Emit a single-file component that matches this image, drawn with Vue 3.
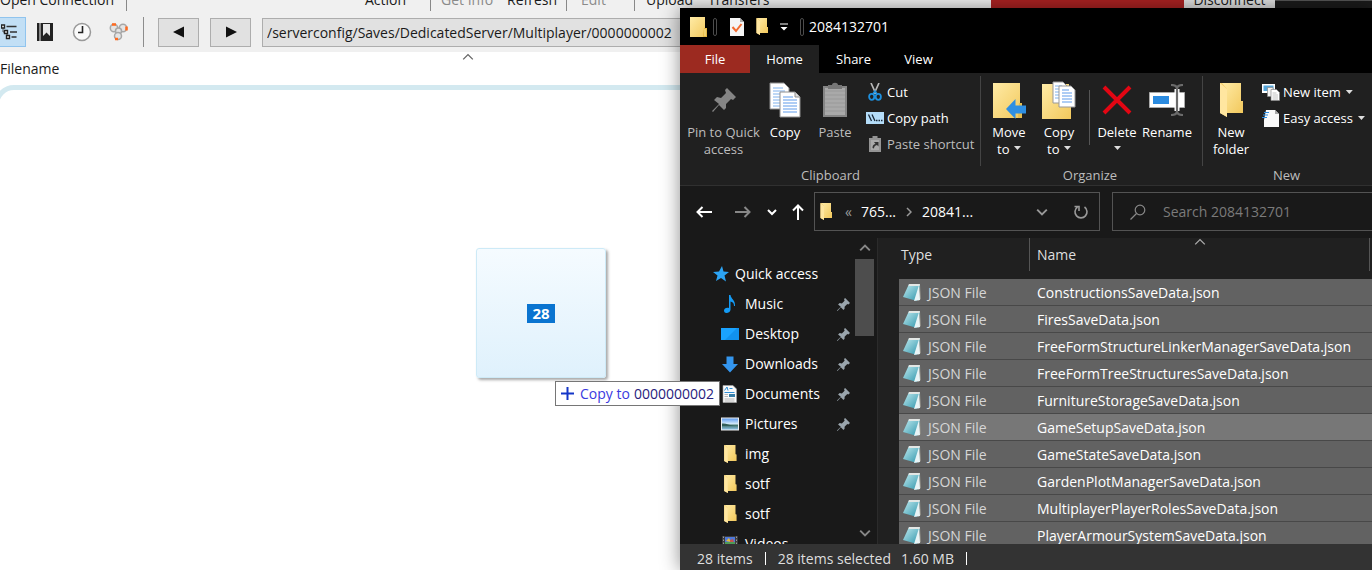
<script setup>
const places = [
  { name: 'Music', icon: 'music', pinned: true },
  { name: 'Desktop', icon: 'desktop', pinned: true },
  { name: 'Downloads', icon: 'download', pinned: true },
  { name: 'Documents', icon: 'document', pinned: true },
  { name: 'Pictures', icon: 'picture', pinned: true },
  { name: 'img', icon: 'folder-open' },
  { name: 'sotf', icon: 'folder-open' },
  { name: 'sotf', icon: 'folder-open' },
  { name: 'Videos', icon: 'video' },
]

const files = [
  'ConstructionsSaveData.json',
  'FiresSaveData.json',
  'FreeFormStructureLinkerManagerSaveData.json',
  'FreeFormTreeStructuresSaveData.json',
  'FurnitureStorageSaveData.json',
  'GameSetupSaveData.json',
  'GameStateSaveData.json',
  'GardenPlotManagerSaveData.json',
  'MultiplayerPlayerRolesSaveData.json',
  'PlayerArmourSystemSaveData.json',
]
const focused = 'GameSetupSaveData.json'
const remotePath = '/serverconfig/Saves/DedicatedServer/Multiplayer/0000000002'
</script>

<template>
  <div class="desktop">
    <svg class="defs" aria-hidden="true">
      <defs>
        <linearGradient id="gFolder" x1="0" y1="0" x2="1" y2="1">
          <stop offset="0" stop-color="#ffeba6" /><stop offset="1" stop-color="#f2c85c" />
        </linearGradient>
        <linearGradient id="gNote" x1="0" y1="0" x2="1" y2="1">
          <stop offset="0" stop-color="#c5edf2" /><stop offset="1" stop-color="#2b93a9" />
        </linearGradient>
        <linearGradient id="gSky" x1="0" y1="0" x2="0" y2="1">
          <stop offset="0" stop-color="#5f9df0" /><stop offset="0.5" stop-color="#d8ecfa" /><stop offset="0.6" stop-color="#3d6f66" /><stop offset="1" stop-color="#8fc4e8" />
        </linearGradient>
      </defs>
      <symbol id="folder" viewBox="0 0 17 20">
        <path d="M0 0H15V11H17V20H0Z" fill="url(#gFolder)" />
        <path d="M14 11h3v9h-4z" fill="#e5b944" />
        <path d="M15 12v7" stroke="#ffe89c" />
      </symbol>
      <symbol id="folder-open" viewBox="0 0 24 34">
        <path d="M1 0H22V18H24V30H8V34L1 30Z" fill="#f5cd69" />
        <path d="M1 0 8 6V34L1 30Z" fill="#ffe6a0" />
        <path d="M9 0H22V18H24V30H8V6L3 0Z" fill="url(#gFolder)" />
      </symbol>
      <symbol id="pin" viewBox="0 0 24 24">
        <path d="M15 0 24 9 21 12 19 11 14 16 14 20 12 22 7 17 1 24 0 23 7 16 2 12 5 9 9 10 14 5 13 2Z" />
      </symbol>
      <symbol id="copy" viewBox="0 0 32 36">
        <path d="M1 1H15L20 6V27H1Z" fill="#fff" stroke="#8e8e8e" />
        <path d="M4 6h10M4 9h12M4 12h7M4 15h7M4 18h7M4 21h7M4 24h7" stroke="#7fb1ec" />
        <path d="M11 10H26L31 15V35H11Z" fill="#fff" stroke="#8e8e8e" />
        <path d="M26 10V15H31" fill="#ddd" stroke="#8e8e8e" />
        <path d="M14 15h10M14 18h14M14 21h14M14 24h14M14 27h14M14 30h14" stroke="#5e9bea" />
      </symbol>
      <symbol id="paste" viewBox="0 0 26 36">
        <path d="M1 4H25V35H1Z" fill="#858585" />
        <path d="M3 6H23V33H3Z" fill="#a9a9a9" />
        <path d="M3 9h20M3 13h20M3 17h20M3 21h20M3 25h20M3 29h20" stroke="#999" />
        <path d="M6 7V3H10C10 0 16 0 16 3H20V7Z" fill="#777" />
      </symbol>
      <symbol id="cut" viewBox="0 0 14 18">
        <path d="M3 0 8 11M11 0 6 11" stroke="#b9b9b9" stroke-width="1.7" fill="none" />
        <ellipse cx="3.7" cy="13.8" rx="2.6" ry="3" fill="none" stroke="#1e8fdd" stroke-width="1.8" />
        <ellipse cx="10.3" cy="13.8" rx="2.6" ry="3" fill="none" stroke="#1e8fdd" stroke-width="1.8" />
        <path d="M5 11 7 8 9 11" fill="none" stroke="#1e8fdd" stroke-width="1.6" />
      </symbol>
      <symbol id="path" viewBox="0 0 18 12">
        <path d="M0 0H18V12H0Z" fill="#b4dcf8" />
        <path d="M2.5 2.500 5.500 9M6 2.500 9 9M10 8.500h1.500M12.500 8.500H14M15 8.500h1.500" stroke="#182838" stroke-width="1.3" fill="none" />
      </symbol>
      <symbol id="shortcut" viewBox="0 0 12 16">
        <path d="M0 2H3.500V0H8.500V2H12V16H0Z" fill="#949494" />
        <path d="M2 4H10V14H2Z" fill="#aaa" />
        <path d="M3.500 12C3.500 9 5 8 6.500 8L5 6H9.500V10.500L8 9C6 9.500 5 10.500 5 12.500Z" fill="#333" />
      </symbol>
      <symbol id="moveto" viewBox="0 0 33 37">
        <path d="M0 1H27V21H29V36H0Z" fill="url(#gFolder)" />
        <path d="M26 21h3v15h-4z" fill="#e6bd4f" />
        <path d="M13 27 22.500 17V23.500H33V31.500H22.500V37Z" fill="#2f8fe2" />
      </symbol>
      <symbol id="copyto" viewBox="0 0 34 38">
        <path d="M0 3H27V22H29V38H0Z" fill="url(#gFolder)" />
        <path d="M11 1H21L25 5V22H11Z" fill="#fff" stroke="#999" />
        <path d="M13 5h7M13 8h8M13 11h8M13 14h8M13 17h8" stroke="#7fb1ec" />
        <path d="M17 5H29L33 9V26H17Z" fill="#fff" stroke="#999" />
        <path d="M20 9h7M20 12h10M20 15h10M20 18h10M20 21h10" stroke="#5e9bea" />
      </symbol>
      <symbol id="delete" viewBox="0 0 30 30">
        <path d="M2 2 28 28M28 2 2 28" stroke="#e30613" stroke-width="4" />
      </symbol>
      <symbol id="rename" viewBox="0 0 36 32">
        <path d="M0.500 8.500H35.500V23.500H0.500Z" fill="#fff" stroke="#aaa" />
        <path d="M4 12H20V20H4Z" fill="#2b8be0" />
        <path d="M28 5V27" stroke="#fff" stroke-width="5" />
        <path d="M22 1C26 1 28 2 28 5V27C28 30 26 31 22 31M34 1C30 1 28 2 28 5M34 31C30 31 28 30 28 27" stroke="#6b6b6b" stroke-width="2.200" fill="none" />
      </symbol>
      <symbol id="newitem" viewBox="0 0 18 18">
        <path d="M0 1H13V10H0Z" fill="#fff" /><path d="M1.500 2.500H11.500V8H1.500Z" fill="#55a5d9" />
        <path d="M5.500 4.500H11V13.500H5.500Z" fill="#f4f4f4" stroke="#888" stroke-width="0.700" />
        <path d="M9 6.500H14.500L17.500 9.500V17.500H9Z" fill="#fff" stroke="#888" stroke-width="0.700" />
        <path d="M10.500 10h4M10.500 12h5.500M10.500 14h5.500M10.500 16h5.500" stroke="#b3b3b3" stroke-width="0.800" />
      </symbol>
      <symbol id="easy" viewBox="0 0 18 18">
        <path d="M4 1H13L17 5V18H2V11Z" fill="#fafafa" /><path d="M13 1V5H17Z" fill="#aaa" />
        <path d="M2 3.500h5M1 6h5M0 8.500h5" stroke="#2e8de0" stroke-width="1.200" />
      </symbol>
      <symbol id="star" viewBox="0 0 16 16">
        <path d="M9 0 10.500 5.500 16 6 11.500 9.500 13 15.500 8 12 3 15 4.500 9.500 0 6 6 5.500Z" fill="#2ca4f4" />
      </symbol>
      <symbol id="music" viewBox="0 0 18 18">
        <path d="M8 0H9.500C10 4 14.500 5 14 11H13C13 8 11.500 7 9.500 6.500V14.500C9.500 17 7 18 5.500 18 3.500 18 3 16.500 3 15.500 3 13.500 5.500 12 8 13Z" fill="#149bf5" />
      </symbol>
      <symbol id="desktop" viewBox="0 0 18 18">
        <path d="M0 3H18V15H0Z" fill="#1aa3ff" /><path d="M4 15 16 3H18V15Z" fill="#1192ee" />
      </symbol>
      <symbol id="download" viewBox="0 0 18 18">
        <path d="M5.500 1.500H12.500V9H17L9 17.500 1 9H5.500Z" fill="#3496ee" />
      </symbol>
      <symbol id="document" viewBox="0 0 18 18">
        <path d="M2 0.500H12L15.500 4V17.500H2Z" fill="#fafafa" stroke="#aaa" stroke-width="0.600" />
        <path d="M3.500 5.500 6 2 7 5.500M8.500 3.500h3M3.500 7.500h10" stroke="#2f8fd6" fill="none" />
        <path d="M8 9H14V12H8Z" fill="#397fa8" />
        <path d="M3.500 9.500h3.500M3.500 11.500h3.500M3.500 14h10M3.500 16h10" stroke="#999" stroke-width="0.700" />
      </symbol>
      <symbol id="picture" viewBox="0 0 18 18">
        <path d="M0 2.500H18V15.500H0Z" fill="#eee" /><path d="M1 3.500H17V14.500H1Z" fill="url(#gSky)" />
        <path d="M1 8.500C5 8 8 10 13 11H1Z" fill="#335e58" />
      </symbol>
      <symbol id="video" viewBox="0 0 18 18">
        <path d="M1 1H17V17H1Z" fill="#3b3b3b" /><path d="M4 2H14V8.500H4Z" fill="#4f79d8" />
        <path d="M5 6 8 3 10 7Z" fill="#e6b93c" /><path d="M9 5 12 4 13 8H9Z" fill="#c8544a" /><path d="M4 7H14V9H4Z" fill="#4e9b57" />
        <path d="M2.500 1.500V17M15.500 1.500V17" stroke="#999" stroke-dasharray="1.500 1.500" />
      </symbol>
      <symbol id="json" viewBox="0 0 19 19">
        <path d="M6 2 17 1 18 16 15 18Z" fill="#8f8d86" />
        <path d="M6 1 17 2 14 18 0 14Z" fill="url(#gNote)" />
        <path d="M16 2 17 17 11 18Z" fill="#e8f4f6" />
        <path d="M6 1 17 1 16.500 3 5.500 3Z" fill="#e3e7e5" />
      </symbol>
      <symbol id="down" viewBox="0 0 10 10"><path d="M1 3 5 7 9 3" fill="none" stroke="currentColor" stroke-width="1.600" /></symbol>
      <symbol id="up" viewBox="0 0 10 10"><path d="M1 7 5 3 9 7" fill="none" stroke="currentColor" stroke-width="1.100" /></symbol>
    </svg>

    <main class="client">
      <nav class="menu">
        <button class="m-open">Open Connection</button>
        <button class="m-action">Action</button>
        <button class="m-info off">Get Info</button>
        <button class="m-refresh">Refresh</button>
        <button class="m-edit off">Edit</button>
        <button class="m-upload">Upload</button>
        <button class="m-transfers">Transfers</button>
        <span class="m-alert"></span>
        <button class="m-disconnect">Disconnect</button>
        <span class="m-rest"></span>
      </nav>
      <div class="toolbar">
        <button class="tool active" aria-label="Outline view">
          <svg width="18" height="18" viewBox="0 0 18 18"><path d="M2 3V9H6M6 9V14" fill="none" stroke="#555" /><path d="M0.500 2h3v3h-3zM3.500 7.500h3v3h-3zM5.500 12.500h3v3h-3z" fill="#fff" stroke="#222" stroke-width="1.400" /><path d="M5.500 3.500h10M9 9h7M10.500 14h5" stroke="#333" stroke-width="1.600" /></svg>
        </button>
        <button class="tool" aria-label="Bookmarks">
          <svg width="18" height="18" viewBox="0 0 18 18"><path d="M1 0H17V18H1Z" fill="#222" /><path d="M4 0v18" stroke="#eee" /><path d="M7 1H14V13L10.500 9.500 7 13Z" fill="#e8e8e8" /></svg>
        </button>
        <button class="tool" aria-label="History">
          <svg width="20" height="20" viewBox="0 0 20 20"><circle cx="10" cy="10" r="8.500" fill="#fafafa" stroke="#999" stroke-width="1.500" /><path d="M10.500 4V10.500H6" fill="none" stroke="#222" stroke-width="1.600" /></svg>
        </button>
        <button class="tool" aria-label="Bonjour">
          <svg width="20" height="20" viewBox="0 0 20 20" fill="#e4e4e4" stroke="#a7a7a7" stroke-width="1.500"><circle cx="5" cy="6" r="3.700" /><circle cx="14" cy="6" r="3.700" /><circle cx="9.500" cy="9" r="3" /><circle cx="9" cy="14" r="3.500" /><path d="M3 2.500h4M17.500 4.500v4M6 17h3" stroke="#ff6a1f" stroke-width="2.500" /></svg>
        </button>
        <span class="divider"></span>
        <button class="nav-btn" aria-label="Back"><svg width="12" height="12" viewBox="0 0 12 12"><path d="M11 0.500V11.500L0 6Z" fill="#111" /></svg></button>
        <button class="nav-btn" aria-label="Forward"><svg width="12" height="12" viewBox="0 0 12 12"><path d="M1 0.500V11.500L12 6Z" fill="#111" /></svg></button>
        <input class="remote" aria-label="Remote path" :value="remotePath" />
      </div>
      <div class="list-head">
        <span>Filename</span>
        <svg class="sort" width="12" height="12"><use href="#up" /></svg>
      </div>
      <div class="drop-zone"></div>
    </main>

    <section class="explorer">
      <header class="title">
        <svg class="t-folder" width="17" height="20"><use href="#folder" /></svg>
        <span class="grip"></span>
        <button class="t-check" aria-label="Properties">
          <svg width="14" height="18" viewBox="0 0 14 18"><path d="M0 0H10L14 4V18H0Z" fill="#f5f5f5" /><path d="M10 0V4H14Z" fill="#aaa" /><path d="M2.500 9 6 13 11.500 6" fill="none" stroke="#f26a2e" stroke-width="2" /></svg>
        </button>
        <button class="t-new" aria-label="New folder"><svg width="12" height="17"><use href="#folder-open" /></svg></button>
        <button class="t-more" aria-label="Customize toolbar"><svg width="8" height="8" viewBox="0 0 8 8"><path d="M0 1h8" stroke="#fff" /><path d="M0.500 4H7.500L4 7.500Z" fill="#fff" /></svg></button>
        <span class="grip"></span>
        <h1>2084132701</h1>
      </header>

      <nav class="tabs">
        <button class="tab file">File</button>
        <button class="tab current">Home</button>
        <button class="tab">Share</button>
        <button class="tab">View</button>
      </nav>

      <div class="ribbon">
        <div class="group clip">
          <div class="tools">
            <button class="big w-pin dim"><span class="pic"><svg width="24" height="24" fill="#858585"><use href="#pin" /></svg></span><span>Pin to Quick<br />access</span></button>
            <button class="big w-copy"><span class="pic"><svg width="32" height="36"><use href="#copy" /></svg></span><span>Copy</span></button>
            <button class="big w-mid dim"><span class="pic"><svg width="26" height="36"><use href="#paste" /></svg></span><span>Paste</span></button>
            <div class="stack">
              <button class="small"><span class="ico"><svg width="14" height="18"><use href="#cut" /></svg></span>Cut</button>
              <button class="small"><span class="ico"><svg width="18" height="12"><use href="#path" /></svg></span>Copy path</button>
              <button class="small dim"><span class="ico"><svg width="12" height="16"><use href="#shortcut" /></svg></span>Paste shortcut</button>
            </div>
          </div>
          <p>Clipboard</p>
        </div>
        <div class="group org">
          <div class="tools">
            <button class="big w-to"><span class="pic"><svg width="33" height="37"><use href="#moveto" /></svg></span><span>Move<br />to <i class="caret"></i></span></button>
            <button class="big w-to"><span class="pic"><svg width="34" height="38"><use href="#copyto" /></svg></span><span>Copy<br />to <i class="caret"></i></span></button>
            <span class="split"></span>
            <button class="big w-mid"><span class="pic"><svg width="30" height="30"><use href="#delete" /></svg></span><span>Delete<br /><i class="caret"></i></span></button>
            <button class="big w-copy"><span class="pic"><svg width="36" height="32"><use href="#rename" /></svg></span><span>Rename</span></button>
          </div>
          <p>Organize</p>
        </div>
        <div class="group new">
          <div class="tools">
            <button class="big w-mid"><span class="pic"><svg width="24" height="34"><use href="#folder-open" /></svg></span><span>New<br />folder</span></button>
            <div class="stack">
              <button class="small"><span class="ico"><svg width="18" height="18"><use href="#newitem" /></svg></span>New item <i class="caret"></i></button>
              <button class="small"><span class="ico"><svg width="18" height="18"><use href="#easy" /></svg></span>Easy access <i class="caret"></i></button>
            </div>
          </div>
          <p>New</p>
        </div>
      </div>

      <div class="address">
        <button class="go" aria-label="Back"><svg width="16" height="12" viewBox="0 0 16 12"><path d="M16 6H1.500M6.500 1 1.500 6 6.500 11" fill="none" stroke="#fff" stroke-width="2" /></svg></button>
        <button class="go" aria-label="Forward"><svg width="16" height="12" viewBox="0 0 16 12"><path d="M0 6H14.500M9.500 1 14.500 6 9.500 11" fill="none" stroke="#888" stroke-width="2" /></svg></button>
        <button class="go recent" aria-label="Recent locations"><svg width="10" height="10" viewBox="0 0 10 10"><path d="M1 3 5 7 9 3" fill="none" stroke="#fff" stroke-width="2" /></svg></button>
        <button class="go parent" aria-label="Up"><svg width="12" height="16" viewBox="0 0 12 16"><path d="M6 16V1.500M1 6.500 6 1.500 11 6.500" fill="none" stroke="#fff" stroke-width="2" /></svg></button>
        <div class="crumbs">
          <svg class="c-folder" width="12" height="17"><use href="#folder-open" /></svg>
          <span class="more">«</span>
          <a href="#">765...</a>
          <svg class="c-arrow" width="6" height="10" viewBox="0 0 6 10"><path d="M1 1 5 5 1 9" fill="none" stroke="#999" stroke-width="1.500" /></svg>
          <a href="#">20841...</a>
          <button class="c-down" aria-label="Previous locations"><svg width="12" height="12"><use href="#down" /></svg></button>
          <button class="c-reload" aria-label="Refresh"><svg width="16" height="16" viewBox="0 0 16 16"><path d="M11.500 3A6 6 0 1 1 4.500 3M1.500 2.500H6V7" fill="none" stroke="#999" stroke-width="1.600" /></svg></button>
        </div>
        <label class="search">
          <svg width="16" height="16" viewBox="0 0 16 16"><circle cx="10" cy="6" r="4.800" fill="none" stroke="#888" stroke-width="1.200" /><path d="M6.500 9.500 0.500 15.500" stroke="#888" stroke-width="1.200" /></svg>
          <input type="search" placeholder="Search 2084132701" aria-label="Search 2084132701" />
        </label>
      </div>

      <div class="body">
        <nav class="places">
          <a class="quick" href="#"><svg width="16" height="16"><use href="#star" /></svg>Quick access</a>
          <a v-for="(p, i) in places" :key="i" class="place" href="#">
            <svg width="18" height="18"><use :href="'#' + p.icon" /></svg>
            <span>{{ p.name }}</span>
            <svg v-if="p.pinned" width="13" height="13" fill="#9aa5ad"><use href="#pin" /></svg>
          </a>
        </nav>
        <div class="scroll">
          <svg width="12" height="12" viewBox="0 0 10 10"><path d="M1 7 5 3 9 7" fill="none" stroke="#888" stroke-width="1.600" /></svg>
          <span class="thumb"></span>
          <svg width="12" height="12"><use href="#down" /></svg>
        </div>
        <div class="files">
          <svg class="sorted" width="12" height="12"><use href="#up" /></svg>
          <table>
            <colgroup><col class="c-type" /><col /></colgroup>
            <thead>
              <tr><th>Type</th><th>Name</th></tr>
            </thead>
            <tbody>
              <tr v-for="f in files" :key="f" :class="{ focused: f === focused }">
                <td><div class="type"><svg width="19" height="19"><use href="#json" /></svg>JSON File</div></td>
                <td>{{ f }}</td>
              </tr>
            </tbody>
          </table>
        </div>
      </div>

      <footer class="status">
        <span>28 items</span><i></i><span>28 items selected</span><span class="size">1.60 MB</span><i></i>
      </footer>
    </section>

    <div class="ghost"><b>28</b></div>
    <div class="tip">
      <svg width="13" height="13" viewBox="0 0 13 13"><path d="M6.500 0V13M0 6.500H13" stroke="#1436c8" stroke-width="2" /></svg>
      <span>Copy to</span><em>0000000002</em>
    </div>
  </div>
</template>

<style>
html, body { margin: 0; background: #fff; }
</style>

<style scoped>
* { box-sizing: border-box; }
.desktop {
  position: relative;
  height: 100vh;
  overflow: hidden;
  background: #fff;
  color: #1a1a1a;
  font: 14px/20px "Open Sans", "Noto Sans", sans-serif;
}
.defs { position: absolute; width: 0; height: 0; }
svg { flex: none; }
button { padding: 0; border: 0; background: none; color: inherit; font: inherit; }
a { color: inherit; text-decoration: none; }

/* transfer client */
.client { display: flex; flex-direction: column; height: 100%; }
.menu { display: flex; height: 12px; background: #f0f0f0; overflow: hidden; }
.menu button { display: flex; align-items: flex-end; height: 9px; white-space: nowrap; line-height: 19px; flex: none; }
.menu .off { color: #8a8a8a; }
.menu .m-open { width: 127px; height: 11px; padding-bottom: 2px; border-right: 1px solid #888; }
.menu .m-action { width: 304px; height: 11px; padding: 0 0 2px 238px; border-right: 1px solid #888; }
.menu .m-info { width: 76px; padding-left: 10px; }
.menu .m-refresh { width: 60px; height: 11px; padding-bottom: 2px; border-right: 1px solid #888; }
.menu .m-edit { width: 68px; height: 11px; padding: 0 0 2px 14px; border-right: 1px solid #888; }
.menu .m-upload { width: 73px; padding-left: 11px; }
.menu .m-transfers { width: 283px; }
.m-alert { width: 193px; background: #ab2222; }
.menu .m-disconnect { width: 91px; justify-content: center; background: #e0e0e0; }
.m-rest { flex: 1; background: #1b1b1b; border-top: 1px solid #555; }
.toolbar { display: flex; align-items: center; height: 40px; background: #f0f0f0; }
.tool { display: flex; align-items: center; justify-content: center; width: 26px; height: 30px; margin-right: 11px; }
.tool.active { margin-right: 6px; padding-right: 6px; background: #c2dff5; border: 1px solid #90c4ee; border-left: 0; }
.divider { width: 1px; height: 30px; margin-right: 14px; background: #8d8d8d; }
.nav-btn { display: flex; align-items: center; justify-content: center; width: 41px; height: 29px; margin-right: 11px; border: 1px solid #adadad; background: #e1e1e1; }
.remote { flex: 1; height: 29px; padding: 0 4px; border: 1px solid #adadad; background: #e1e1e1; color: #1a1a1a; font: inherit; }
.list-head { position: relative; height: 33px; line-height: 34px; }
.sort { position: absolute; left: 462px; top: -1px; color: #666; }
.drop-zone { flex: 1; margin: 0 -6px -30px; border: 5px solid #d3e9f0; border-radius: 20px; }

/* file explorer */
.explorer {
  position: absolute; left: 680px; right: 0; top: 8px; bottom: 0;
  display: flex; flex-direction: column;
  background: #191919; color: #fff;
  box-shadow: 0 0 18px rgba(0, 0, 0, 0.45);
}
.title { display: flex; align-items: center; height: 37px; padding-left: 10px; background: #000; }
.title button, .go { display: flex; }
.grip { width: 4px; height: 18px; margin-left: 6px; border: 1px solid #4c4c4c; border-radius: 2px; }
.t-check { margin-left: 13px; }
.t-new { margin-left: 12px; }
.t-more { margin-left: 12px; }
.t-more + .grip { margin-left: 12px; }
h1 { margin: 0 0 0 5px; font-size: 14px; font-weight: 400; }
.tabs { display: flex; height: 28px; background: #000; font-size: 13px; }
.tab { width: 69px; }
.tab.file { width: 70px; background: #9c2a20; }
.tab.current { background: #202020; }
.tab:last-child { width: 61px; }

.ribbon { display: flex; height: 113px; padding-top: 3px; background: #202020; border-bottom: 1px solid #303030; font-size: 13px; line-height: 17px; }
.group { position: relative; display: flex; flex-direction: column; padding: 3px 5px 0 5px; }
.group::after { content: ""; position: absolute; right: 0; top: 0; height: 90px; border-right: 1px solid #444; }
.group.clip { width: 301px; }
.group.org { width: 222px; padding: 3px 7px 0 3px; }
.group.new { flex: 1; padding: 3px 3px 0 1px; }
.group.new::after { content: none; }
.group p { margin: 8px 0 0; color: #bdbdbd; text-align: center; }
.tools { display: flex; height: 80px; }
.big { display: flex; flex-direction: column; align-items: center; height: 80px; white-space: nowrap; text-align: center; flex: none; }
.pic { display: flex; align-items: center; justify-content: center; height: 42px; margin-bottom: 3px; }
.dim { color: #bdbdbd; }
.w-pin { width: 77px; }
.w-copy { width: 46px; }
.w-mid { width: 54px; }
.w-to { width: 50px; }
.split { width: 1px; height: 55px; margin: 11px 0 0 5px; background: #555; }
.stack { display: flex; flex-direction: column; margin-left: 4px; }
.small { display: flex; align-items: center; height: 26px; white-space: nowrap; }
.ico { display: flex; justify-content: center; width: 18px; margin-right: 3px; }
.caret { display: inline-block; width: 7px; height: 4px; margin-left: 1px; vertical-align: 4px; background: #ddd; clip-path: polygon(0 0, 100% 0, 50% 100%); }
.small .caret { margin-left: 5px; }

.address { display: flex; align-items: center; height: 52px; padding: 0 0 1px 16px; }
.go + .go { margin-left: 23px; }
.go + .recent { margin-left: 16px; }
.go + .parent { margin-left: 15px; }
.crumbs { display: flex; align-items: center; flex: none; width: 286px; height: 39px; margin-left: 10px; padding-left: 5px; border: 1px solid #535353; }
.more { margin: 0 9px 0 13px; color: #999; }
.c-arrow { margin: 0 10px 0 10px; }
.c-down { display: flex; margin-left: auto; color: #999; }
.c-reload { display: flex; margin: 0 10px 0 25px; }
.search { display: flex; align-items: center; flex: 1; min-width: 0; height: 39px; margin-left: 12px; padding-left: 17px; border: 1px solid #535353; border-right: 0; }
.search input { flex: 1; min-width: 0; margin-left: 17px; padding: 0; border: 0; outline: 0; background: none; color: #fff; font: inherit; appearance: none; }
.search input::placeholder { color: #7b7b7b; opacity: 1; }

.body { display: flex; flex: 1; min-height: 0; }
.places { width: 175px; padding-top: 21px; overflow: hidden; }
.places a { display: flex; align-items: center; height: 30px; }
.quick { padding-left: 33px; gap: 6px; }
.place { padding: 0 5px 0 41px; }
.place span { flex: 1; margin-left: 6px; }
.scroll { display: flex; flex-direction: column; align-items: center; width: 23px; padding: 4px 3px 5px 0; border-right: 1px solid #2b2b2b; color: #888; }
.thumb { width: 19px; height: 77px; margin: 5px 0 auto; background: #4d4d4d; }
.files { position: relative; flex: 1; min-width: 0; padding-left: 21px; overflow: hidden; background: #202020; }
.sorted { position: absolute; left: 316px; top: -2px; color: #aaa; }
table { width: 100%; border-collapse: separate; border-spacing: 0; table-layout: fixed; }
.c-type { width: 131px; }
th { height: 41px; padding: 0 0 8px 2px; text-align: left; font-weight: 400; background: linear-gradient(#555, #555) right top / 1px 33px no-repeat; color: #dedede; }
th + th { padding-left: 7px; background-position: right 2px top; }
td { height: 27px; padding: 1px 0 0 7px; border-bottom: 1px solid #484848; white-space: nowrap; }
tbody tr { background: #626262; }
tbody tr.focused { background: #777; }
td:first-child { padding-left: 4px; color: #d6d6d6; }
.type { display: flex; align-items: center; gap: 6px; height: 25px; }
.status { display: flex; align-items: center; height: 26px; padding: 3px 0 0 17px; background: #333; color: #dedede; }
.status i { width: 1px; height: 13px; margin: 0 12px; background: #fff; }
.status .size { margin-left: 10px; }

/* drag feedback */
.ghost {
  position: absolute; left: 476px; top: 248px; width: 130px; height: 130px;
  display: flex; align-items: center; justify-content: center;
  border: 1px solid #cdeaf7; border-radius: 3px;
  background: linear-gradient(#f5fbff, #dff1fc);
  box-shadow: 2px 2px 3px rgba(0, 0, 0, 0.35);
}
.ghost b { width: 28px; background: #0a74d0; color: #fff; font-size: 15px; text-align: center; line-height: 19px; }
.tip {
  position: absolute; left: 555px; top: 381px;
  display: flex; align-items: center; height: 25px; padding: 0 5px;
  border: 1px solid #767676; background: #fff; color: #3a3ae0;
}
.tip span { margin: 0 4px 0 6px; }
.tip em { color: #27207c; font-style: normal; }
</style>
